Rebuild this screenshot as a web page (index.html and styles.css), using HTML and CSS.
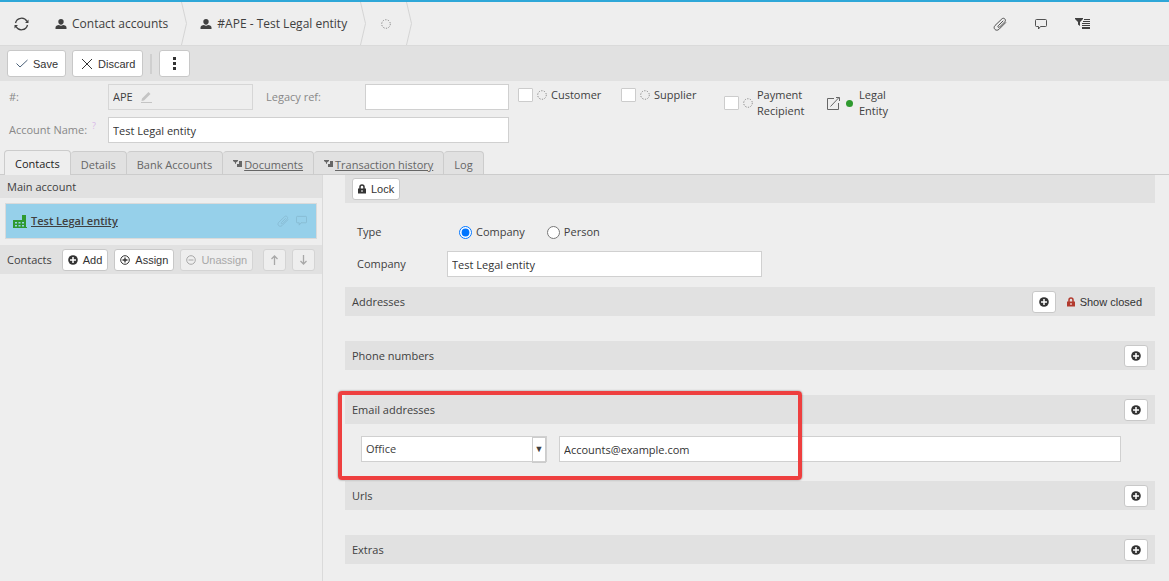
FILE: index.html
```html
<!DOCTYPE html>
<html lang="en">

<head>
  <meta charset="UTF-8">
  <meta name="viewport" content="width=device-width, initial-scale=1.0">
  <title>#APE - Test Legal entity</title>
  <link rel="stylesheet" href="styles.css">
</head>

<body>
  <!-- Shared icons -->
  <svg class="sprite" aria-hidden="true">
    <symbol id="user" viewBox="0 0 12 12">
      <path d="M6 1a2.700 2.700 0 0 1 2.700 2.700c0 1.600-1.200 3-2.700 3S3.300 5.300 3.300 3.700A2.700 2.700 0 0 1 6 1zM.5 11V9.500C.5 8 2 7.400 4 7.100c1.200.8 2.800.8 4 0 2 .3 3.500.9 3.500 2.400V11z" fill="currentColor" />
    </symbol>
    <symbol id="clip" viewBox="0 0 14 14">
      <path d="M10 4L5.200 8.800c-.9 1 .3 2.200 1.300 1.300l5.300-5.300c1.900-2-1-4.800-2.900-2.900L2 8.500c-2.500 2.800 1 6.300 3.900 3.900l6.800-6.800" fill="none" stroke="currentColor" stroke-width=".9" stroke-linecap="round" />
    </symbol>
    <symbol id="comment" viewBox="0 0 12 12">
      <path d="M1.500 1.500h9q1 0 1 1v5q0 1-1 1H5.500L3.500 11V8.500h-2q-1 0-1-1v-5q0-1 1-1z" fill="none" stroke="currentColor" stroke-width=".9" />
    </symbol>
    <symbol id="filter" viewBox="0 0 15 11">
      <path d="M0 0h8v1L5 4v4L3 6.500V4L0 1zM9 1h6v1H9zM8 3h7v1H8zM7 5h8v1H7zM7 7h8v1H7zM7 9h8v2H7z" fill="currentColor" />
    </symbol>
    <symbol id="filter-sm" viewBox="0 0 9 7">
      <path d="M0 0h5v1L3 2.500V4L2 3.500v-1L0 1zM6 1h3v6H4V4h2z" fill="currentColor" />
    </symbol>
    <symbol id="plus" viewBox="0 0 10 10">
      <circle cx="5" cy="5" r="4.800" fill="currentColor" />
      <path d="M5 2v6M2 5h6" stroke="#fff" stroke-width="1.500" />
    </symbol>
    <symbol id="plus-o" viewBox="0 0 10 10">
      <circle cx="5" cy="5" r="4.300" fill="none" stroke="currentColor" />
      <path d="M5 2.500v5M2.500 5h5" stroke="currentColor" stroke-width="1.300" />
    </symbol>
    <symbol id="minus-o" viewBox="0 0 10 10">
      <circle cx="5" cy="5" r="4.300" fill="none" stroke="currentColor" />
      <path d="M2.500 5h5" stroke="currentColor" />
    </symbol>
    <symbol id="lock" viewBox="0 0 8 10">
      <path d="M2 5V3a2 2 0 0 1 4 0v2" fill="none" stroke="currentColor" stroke-width="1.500" />
      <path d="M0 4.500h8V9.500H0z" fill="currentColor" />
      <path d="M4 6v2" stroke="#fff" />
    </symbol>
    <symbol id="dots" viewBox="0 0 10 10">
      <circle cx="5" cy="5" r="4.300" fill="none" stroke="currentColor" stroke-dasharray="1.300 1.400" />
    </symbol>
    <symbol id="chevron" viewBox="0 0 6 43" preserveAspectRatio="none">
      <path d="M.5 0l5 21.500L.5 43" fill="none" stroke="#d4d4d4" />
    </symbol>
  </svg>

  <header class="topbar">
    <button class="icon-btn refresh" aria-label="Refresh">
      <svg width="15" height="14" viewBox="0 0 15 14" fill="none" stroke="currentColor" stroke-width="1.300">
        <path d="M1.500 6A6.200 6.200 0 0 1 13 4.500M13.500 8A6.200 6.200 0 0 1 2 9.500" />
        <path d="M14.500 2.500v3.500H11zM.5 11.500V8H4z" fill="currentColor" stroke="none" />
      </svg>
    </button>
    <nav class="crumbs">
      <a href="#" class="crumb"><svg width="12" height="12"><use href="#user" /></svg>Contact accounts</a>
      <svg class="chevron"><use href="#chevron" /></svg>
      <a href="#" class="crumb"><svg width="12" height="12"><use href="#user" /></svg>#APE - Test Legal entity</a>
      <svg class="chevron"><use href="#chevron" /></svg>
      <span class="crumb crumb-status"><svg width="10" height="10"><use href="#dots" /></svg></span>
      <svg class="chevron"><use href="#chevron" /></svg>
    </nav>
    <div class="top-tools">
      <button class="icon-btn" aria-label="Attachments"><svg width="14" height="14"><use href="#clip" /></svg></button>
      <button class="icon-btn" aria-label="Comments"><svg width="12" height="12"><use href="#comment" /></svg></button>
      <button class="icon-btn" aria-label="Filter"><svg width="15" height="11"><use href="#filter" /></svg></button>
    </div>
  </header>

  <div class="toolbar">
    <button class="btn btn-lg"><svg width="12" height="9" viewBox="0 0 12 9"><path d="M.5 4.500L4 8l7.500-7" fill="none" stroke="#4a6078" /></svg>Save</button>
    <button class="btn btn-lg"><svg width="12" height="12" viewBox="0 0 12 12"><path d="M1 1l10 10M11 1L1 11" fill="none" stroke="currentColor" /></svg>Discard</button>
    <span class="divider"></span>
    <button class="btn btn-lg btn-more" aria-label="More"><svg width="3" height="13" viewBox="0 0 3 13"><path d="M0 0h3v3H0zM0 5h3v3H0zM0 10h3v3H0z" fill="currentColor" /></svg></button>
  </div>

  <section class="account">
    <div class="fields">
      <label for="code">#:</label>
      <div class="code-box">
        <input type="text" id="code" value="APE" size="3" readonly>
        <svg width="11" height="12" viewBox="0 0 11 12"><path d="M1 7.500L7.500 1l2 2L3 9.500l-2.500.5zM0 11h11v1H0z" fill="#c4c4c4" /></svg>
      </div>
      <label for="legacy" class="legacy-label">Legacy ref:</label>
      <input type="text" id="legacy" class="text-input">
      <label for="account-name">Account Name: <sup class="hint">?</sup></label>
      <input type="text" id="account-name" class="text-input name-input" value="Test Legal entity">
    </div>
    <div class="roles">
      <label class="role"><input type="checkbox"><svg width="10" height="10"><use href="#dots" /></svg>Customer</label>
      <label class="role"><input type="checkbox"><svg width="10" height="10"><use href="#dots" /></svg>Supplier</label>
      <label class="role role-tall"><input type="checkbox"><svg width="10" height="10"><use href="#dots" /></svg>Payment Recipient</label>
      <a href="#" class="role role-tall role-link">
        <svg width="13" height="13" viewBox="0 0 13 13" fill="none" stroke="#666"><path d="M7 1.500H.5v11h11V6M3.500 9.500l8.500-9M9 .5h3.500V4" /></svg>
        <span class="dot"></span>
        <span>Legal Entity</span>
      </a>
    </div>
  </section>

  <nav class="tabs">
    <a href="#" class="tab tab-active">Contacts</a>
    <a href="#" class="tab">Details</a>
    <a href="#" class="tab">Bank Accounts</a>
    <a href="#" class="tab tab-filter"><svg width="9" height="7"><use href="#filter-sm" /></svg><u>Documents</u></a>
    <a href="#" class="tab tab-filter"><svg width="9" height="7"><use href="#filter-sm" /></svg><u>Transaction history</u></a>
    <a href="#" class="tab">Log</a>
  </nav>

  <main class="panels">
    <aside class="side">
      <h2 class="side-title">Main account</h2>
      <div class="entity">
        <svg width="14" height="14" viewBox="0 0 14 14"><path d="M0 13V6h9V1h4v12h1v1H0z" fill="#2f9a2f" /><path d="M2 8h2v1.500H2zM5.500 8h2v1.500h-2zM9 8h2v1.500H9zM2 11h2v1.500H2zM5.500 11h2v1.500h-2zM9 11h2v1.500H9z" fill="#96d0ea" /></svg>
        <a href="#" class="entity-name">Test Legal entity</a>
        <span class="entity-tools">
          <svg width="12" height="12"><use href="#clip" /></svg>
          <svg width="11" height="11"><use href="#comment" /></svg>
        </span>
      </div>
      <div class="contacts-bar">
        <h2>Contacts</h2>
        <button class="btn"><svg width="10" height="10"><use href="#plus" /></svg>Add</button>
        <button class="btn"><svg width="10" height="10"><use href="#plus-o" /></svg>Assign</button>
        <button class="btn" disabled><svg width="10" height="10"><use href="#minus-o" /></svg>Unassign</button>
        <span class="arrows">
          <button class="btn" disabled aria-label="Move up"><svg width="7" height="10" viewBox="0 0 7 10"><path d="M3.500 10V1M.5 4l3-3 3 3" fill="none" stroke="currentColor" stroke-width="1.300" /></svg></button>
          <button class="btn" disabled aria-label="Move down"><svg width="7" height="10" viewBox="0 0 7 10"><path d="M3.500 0v9M.5 6l3 3 3-3" fill="none" stroke="currentColor" stroke-width="1.300" /></svg></button>
        </span>
      </div>
    </aside>

    <div class="detail">
      <div class="bar bar-lock">
        <button class="btn"><svg width="8" height="10"><use href="#lock" /></svg>Lock</button>
      </div>

      <div class="detail-form">
        <span>Type</span>
        <div class="radios">
          <label><input type="radio" name="type" checked>Company</label>
          <label><input type="radio" name="type">Person</label>
        </div>
        <label for="company">Company</label>
        <input type="text" id="company" class="text-input company-input" value="Test Legal entity">
      </div>

      <section class="group">
        <div class="bar">
          <h2>Addresses</h2>
          <button class="btn btn-plus" aria-label="Add address"><svg width="10" height="10"><use href="#plus" /></svg></button>
          <button class="show-closed"><svg width="8" height="10"><use href="#lock" /></svg>Show closed</button>
        </div>
      </section>
      <section class="group">
        <div class="bar">
          <h2>Phone numbers</h2>
          <button class="btn btn-plus" aria-label="Add phone number"><svg width="10" height="10"><use href="#plus" /></svg></button>
        </div>
      </section>
      <section class="group group-email">
        <div class="bar">
          <h2>Email addresses</h2>
          <button class="btn btn-plus" aria-label="Add email address"><svg width="10" height="10"><use href="#plus" /></svg></button>
        </div>
        <div class="email-row">
          <span class="select">
            <select aria-label="Email type">
              <option>Office</option>
            </select>
          </span>
          <input type="text" class="text-input" aria-label="Email address" value="Accounts@example.com">
        </div>
        <div class="highlight"></div>
      </section>
      <section class="group">
        <div class="bar">
          <h2>Urls</h2>
          <button class="btn btn-plus" aria-label="Add url"><svg width="10" height="10"><use href="#plus" /></svg></button>
        </div>
      </section>
      <section class="group">
        <div class="bar">
          <h2>Extras</h2>
          <button class="btn btn-plus" aria-label="Add extra"><svg width="10" height="10"><use href="#plus" /></svg></button>
        </div>
      </section>
    </div>
  </main>
</body>

</html>
```

FILE: styles.css
```css
* {
  box-sizing: border-box;
}

body {
  display: flex;
  flex-direction: column;
  min-height: 100vh;
  margin: 0;
  background: #eee;
  color: #404040;
  font-family: "Open Sans", "Noto Sans", sans-serif;
  font-size: 11px;
  line-height: 16px;
}

h2 {
  margin: 0;
  font-size: 11px;
  font-weight: normal;
}

a {
  color: inherit;
  text-decoration: none;
}

svg {
  flex: none;
}

input,
select {
  margin: 0;
  color: inherit;
  font: inherit;
}

.sprite {
  position: absolute;
  width: 0;
  height: 0;
}

/* Buttons */
.btn {
  display: inline-flex;
  align-items: center;
  justify-content: center;
  gap: 5px;
  height: 22px;
  padding: 0 5px;
  background: #fff;
  border: 1px solid #c8c8c8;
  border-radius: 3px;
  color: #333;
  font-family: "Liberation Sans", Arial, sans-serif;
  font-size: 11px;
  cursor: pointer;
}

.btn:disabled {
  background: #eee;
  border-color: #d4d4d4;
  color: #a8a8a8;
  cursor: default;
}

.btn-lg {
  height: 27px;
  padding: 0 7px 0 8px;
}

.btn-more {
  width: 31px;
  padding: 0;
}

.btn-plus {
  width: 24px;
  padding: 0;
}

.icon-btn {
  display: flex;
  padding: 0;
  background: none;
  border: 0;
  color: #404040;
  cursor: pointer;
}

/* Breadcrumbs */
.topbar {
  display: flex;
  align-items: center;
  height: 46px;
  padding-left: 14px;
  border-top: 2px solid #2ea7d8;
  border-bottom: 1px solid #dadada;
}

.crumbs {
  display: flex;
  align-items: center;
  align-self: stretch;
  margin-left: 13px;
}

.crumb {
  display: flex;
  align-items: center;
  gap: 5px;
  padding: 0 13px;
  font-size: 12px;
}

.crumb-status {
  padding: 0 15px;
  color: #888;
}

.chevron {
  width: 6px;
  height: 43px;
}

.top-tools {
  display: flex;
  align-items: center;
  gap: 28px;
  margin-left: auto;
  padding-right: 79px;
}

/* Toolbar */
.toolbar {
  display: flex;
  align-items: center;
  gap: 6px;
  height: 35px;
  padding: 0 7px;
  background: #e1e1e1;
}

.divider {
  width: 2px;
  height: 20px;
  margin: 0 1px;
  background: #cfcfcf;
}

/* Account fields */
.account {
  display: flex;
  gap: 9px;
  padding: 3px 9px 7px;
}

.fields {
  display: grid;
  grid-template-columns: 99px 145px 112px 144px;
  row-gap: 7px;
  align-items: center;
  color: #888;
}

.text-input {
  width: 100%;
  height: 26px;
  padding: 0 4px;
  background: #fff;
  border: 1px solid #d0d0d0;
  color: #333;
}

.name-input {
  grid-column: span 3;
}

.code-box {
  display: flex;
  align-items: center;
  gap: 4px;
  height: 26px;
  padding: 0 4px;
  border: 1px solid #d6d6d6;
}

.code-box input {
  width: 24px;
  padding: 0;
  background: none;
  border: 0;
  color: #404040;
}

.legacy-label {
  padding-left: 13px;
}

.hint {
  padding-left: 2px;
  color: #d9b8e8;
  font-size: 9px;
  line-height: 0;
}

.roles {
  display: grid;
  grid-template-columns: repeat(4, 103px);
  align-items: start;
}

.role {
  display: flex;
  align-items: center;
  gap: 4px;
  padding-top: 3px;
}

.role-tall {
  padding-right: 20px;
}

.role svg {
  color: #888;
}

.role input {
  appearance: none;
  flex: none;
  width: 15px;
  height: 14px;
  background: #fff;
  border: 1px solid #ccc;
  border-radius: 1px;
}

.role-link {
  gap: 6px;
}

.dot {
  flex: none;
  width: 7px;
  height: 7px;
  border-radius: 50%;
  background: #2f9a2f;
}

/* Tabs */
.tabs {
  display: flex;
  align-items: flex-end;
  height: 25px;
  padding-left: 4px;
  border-bottom: 1px solid #ccc;
}

.tab {
  display: flex;
  align-items: center;
  height: 23px;
  padding: 4px 10px 0;
  background: #e1e1e1;
  border: 1px solid #ccc;
  border-width: 1px 1px 0 0;
  border-radius: 4px 4px 0 0;
  color: #666;
}

.tab-active {
  height: 25px;
  margin-bottom: -1px;
  padding-top: 2px;
  background: #eee;
  border-left-width: 1px;
  color: #222;
}

.tab-filter {
  gap: 2px;
}

.tab-filter svg {
  margin-bottom: 4px;
}

/* Panels */
.panels {
  display: flex;
  flex: 1;
}

.side {
  flex: none;
  width: 323px;
  border-right: 1px solid #dadada;
}

.side-title {
  padding: 4px 7px 3px;
  background: #e1e1e1;
}

.entity {
  display: flex;
  align-items: center;
  gap: 4px;
  height: 36px;
  margin: 5px 5px 6px;
  padding: 0 7px;
  background: #96d0ea;
  border: 1px solid #dadada;
}

.entity-name {
  font-weight: 600;
  text-decoration: underline;
}

.entity-tools {
  display: flex;
  gap: 7px;
  margin-left: auto;
  padding-right: 2px;
  color: #86b9d0;
}

.contacts-bar {
  display: flex;
  align-items: center;
  gap: 6px;
  height: 29px;
  padding: 0 7px;
  background: #e1e1e1;
}

.contacts-bar h2 {
  margin-right: 4px;
}

.arrows {
  display: flex;
  gap: 6px;
  margin-left: auto;
}

.arrows .btn {
  width: 23px;
}

.detail {
  flex: 1;
  padding: 0 14px 17px 22px;
}

.bar {
  display: flex;
  align-items: center;
  height: 29px;
  padding: 0 7px;
  background: #e1e1e1;
}

.bar-lock {
  height: 28px;
}

.bar h2 {
  flex: 1;
}

.detail-form {
  display: grid;
  grid-template-columns: 90px 1fr;
  row-gap: 11px;
  align-items: center;
  padding: 21px 12px 10px;
}

.company-input {
  max-width: 315px;
}

.radios {
  display: flex;
  gap: 22px;
  padding-left: 12px;
}

.radios label {
  display: flex;
  align-items: center;
  gap: 4px;
}

.radios input {
  width: 13px;
  height: 13px;
}

.show-closed {
  display: flex;
  align-items: center;
  gap: 5px;
  padding: 0 6px 0 11px;
  background: none;
  border: 0;
  color: #333;
  font-family: "Liberation Sans", Arial, sans-serif;
  font-size: 11px;
  cursor: pointer;
}

.show-closed svg {
  color: #b23a2e;
}

.group + .group {
  margin-top: 25px;
}

.group-email {
  position: relative;
}

.group.group-email + .group {
  margin-top: 19px;
}

.email-row {
  display: grid;
  grid-template-columns: 186px 1fr;
  gap: 12px;
  padding: 12px 34px 0 16px;
}

.select {
  position: relative;
}

.select select {
  appearance: none;
  width: 100%;
  height: 26px;
  padding: 0 18px 0 4px;
  background: #fff;
  border: 1px solid #d0d0d0;
  border-radius: 0;
}

.select::after {
  content: "▼";
  position: absolute;
  top: 1px;
  right: 1px;
  width: 12px;
  height: 24px;
  border: 1px solid #ccc;
  font-size: 9px;
  line-height: 22px;
  text-align: center;
  pointer-events: none;
}

/* Red frame around the email block */
.highlight {
  position: absolute;
  top: -4px;
  left: -7px;
  width: 464px;
  height: 89px;
  border: 4px solid #ee3f3f;
  border-radius: 4px;
  box-shadow: 0 0 2px rgba(0, 0, 0, 0.5);
  pointer-events: none;
}
```
